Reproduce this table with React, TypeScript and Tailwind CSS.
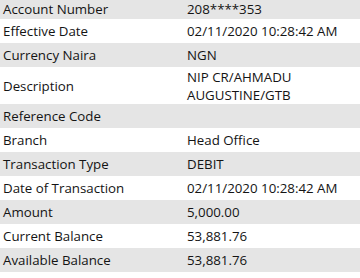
const rows: { label: string; value: string; tall?: boolean }[] = [
  { label: "Account Number", value: "208****353" },
  { label: "Effective Date", value: "02/11/2020 10:28:42 AM" },
  { label: "Currency Naira", value: "NGN" },
  { label: "Description", value: "NIP CR/AHMADU AUGUSTINE/GTB", tall: true },
  { label: "Reference Code", value: "" },
  { label: "Branch", value: "Head Office" },
  { label: "Transaction Type", value: "DEBIT" },
  { label: "Date of Transaction", value: "02/11/2020 10:28:42 AM" },
  { label: "Amount", value: "5,000.00" },
  { label: "Current Balance", value: "53,881.76" },
  { label: "Available Balance", value: "53,881.76" },
];

const App = () => {
  return (
    <div className="w-[360px] h-[278px] overflow-hidden bg-white">
      <div
        className="text-[13.3px] text-[#141414]"
        style={{ fontFamily: '"Open Sans", sans-serif' }}
      >
        {rows.map((r, i) => (
          <div
            key={r.label}
            className={`grid grid-cols-[184px_1fr] ${
              i === 0
                ? "h-[19px] items-start leading-[18px]"
                : r.tall
                ? "h-[37px] items-center leading-[18px]"
                : "h-[24px] items-center leading-[18px]"
            } ${i % 2 === 0 ? "bg-[#e5e5e5]" : "bg-white"}`}
          >
            <div className="pl-[3px]">{r.label}</div>
            <div className="pl-[3px] pr-2">{r.value}</div>
          </div>
        ))}
      </div>
    </div>
  );
};

export default App;
